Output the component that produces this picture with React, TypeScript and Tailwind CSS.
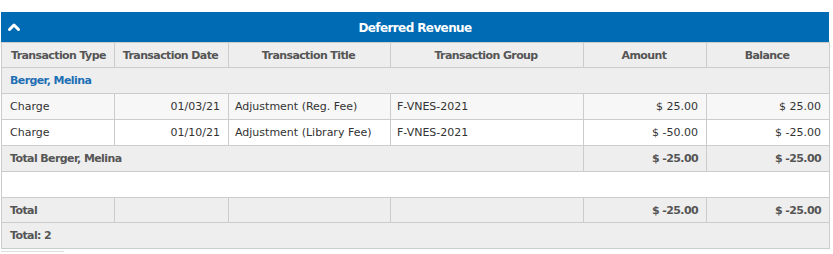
import React from "react";

interface Row {
  type: string;
  date: string;
  title: string;
  group: string;
  amount: string;
  balance: string;
}

const rows: Row[] = [
  { type: "Charge", date: "01/03/21", title: "Adjustment (Reg. Fee)", group: "F-VNES-2021", amount: "$ 25.00", balance: "$ 25.00" },
  { type: "Charge", date: "01/10/21", title: "Adjustment (Library Fee)", group: "F-VNES-2021", amount: "$ -50.00", balance: "$ -25.00" },
];

const cell = "border border-[#cccccc] pl-[6px] pr-2 pt-[2px] h-[26px] whitespace-nowrap";
const short = "border border-[#cccccc] pl-[6px] pr-2 pt-[2px] h-[25px] whitespace-nowrap";
const bold = "font-bold tracking-[-0.6px]";

const App: React.FC = () => {
  return (
    <div className="bg-white w-[833px] h-[254px] pt-3 pl-px" style={{ fontFamily: "'DejaVu Sans', Verdana, sans-serif" }}>
      <div className="w-[828px]">
        <div className="flex items-center h-[30px] bg-[#006bb5] text-white relative">
          <svg width="14" height="10" viewBox="0 0 14 10" className="absolute left-[6px] top-[10px]">
            <polyline points="2.5,7.5 7,3 11.5,7.5" fill="none" stroke="white" strokeWidth="3" strokeLinecap="round" strokeLinejoin="round" />
          </svg>
          <div className={`flex-1 text-center text-[12px] pt-px ${bold}`}>Deferred Revenue</div>
        </div>
        <table className="border-collapse table-fixed w-[828px] text-[11px] text-[#333333]">
          <colgroup>
            <col className="w-[113px]" />
            <col className="w-[114px]" />
            <col className="w-[162px]" />
            <col className="w-[193px]" />
            <col className="w-[123px]" />
            <col className="w-[123px]" />
          </colgroup>
          <thead>
            <tr className={`bg-[#eeeeee] text-[#555555] ${bold}`}>
              <th className={`${short} text-left pl-[9px]`}>Transaction Type</th>
              <th className={short}>Transaction Date</th>
              <th className={short}>Transaction Title</th>
              <th className={short}>Transaction Group</th>
              <th className={short}>Amount</th>
              <th className={short}>Balance</th>
            </tr>
          </thead>
          <tbody>
            <tr className="bg-[#eeeeee]">
              <td colSpan={6} className={`${cell} ${bold} pl-[8px] text-[#1e6fb5]`}>Berger, Melina</td>
            </tr>
            {rows.map((r, i) => (
              <tr key={i} className={i % 2 === 0 ? "bg-[#f7f7f7]" : "bg-white"}>
                <td className={`${cell} pl-[8px]`}>{r.type}</td>
                <td className={`${cell} text-right`}>{r.date}</td>
                <td className={cell}>{r.title}</td>
                <td className={cell}>{r.group}</td>
                <td className={`${cell} text-right`}>{r.amount}</td>
                <td className={`${cell} text-right`}>{r.balance}</td>
              </tr>
            ))}
            <tr className={`bg-[#eeeeee] text-[#555555] ${bold}`}>
              <td colSpan={4} className={`${cell} pl-[8px]`}>Total Berger, Melina</td>
              <td className={`${cell} text-right`}>$ -25.00</td>
              <td className={`${cell} text-right`}>$ -25.00</td>
            </tr>
            <tr className="bg-white">
              <td colSpan={6} className={cell}></td>
            </tr>
            <tr className={`bg-[#eeeeee] text-[#555555] ${bold}`}>
              <td className={`${short} pl-[8px]`}>Total</td>
              <td className={short}></td>
              <td className={short}></td>
              <td className={short}></td>
              <td className={`${short} text-right`}>$ -25.00</td>
              <td className={`${short} text-right`}>$ -25.00</td>
            </tr>
            <tr className={`bg-[#eeeeee] text-[#555555] ${bold}`}>
              <td colSpan={6} className={`${cell} pl-[8px]`}>Total: 2</td>
            </tr>
          </tbody>
        </table>
        <div className="mt-[2px] w-[63px] h-[4px] border-t border-[#dddddd]"></div>
      </div>
    </div>
  );
};

export default App;
